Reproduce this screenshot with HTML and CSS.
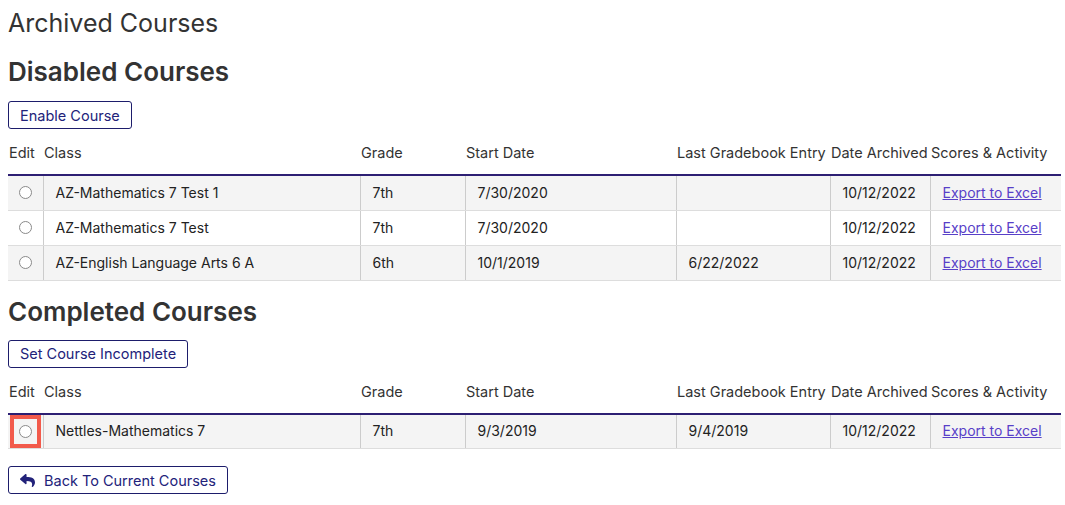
FILE: index.html
```html
<html>
<head>
    <title>Archived Courses</title>
<link rel="stylesheet" href="styles.css">
</head>
<body>
<div class="page">
    <h1 class="title">Archived Courses</h1>

    <h2 class="section">Disabled Courses</h2>
    <button class="btn">Enable Course</button>

    <table class="courses">
        <colgroup>
            <col class="c-edit"><col class="c-class"><col class="c-grade"><col class="c-start">
            <col class="c-last"><col class="c-arch"><col class="c-score">
        </colgroup>
        <thead>
            <tr>
                <th>Edit</th><th>Class</th><th>Grade</th><th>Start Date</th>
                <th>Last Gradebook Entry</th><th>Date Archived</th><th>Scores &amp; Activity</th>
            </tr>
        </thead>
        <tbody>
            <tr>
                <td class="edit"><input type="radio" name="disabled"></td>
                <td>AZ-Mathematics 7 Test 1</td><td>7th</td><td>7/30/2020</td>
                <td></td><td>10/12/2022</td><td><a href="#">Export to Excel</a></td>
            </tr>
            <tr>
                <td class="edit"><input type="radio" name="disabled"></td>
                <td>AZ-Mathematics 7 Test</td><td>7th</td><td>7/30/2020</td>
                <td></td><td>10/12/2022</td><td><a href="#">Export to Excel</a></td>
            </tr>
            <tr>
                <td class="edit"><input type="radio" name="disabled"></td>
                <td>AZ-English Language Arts 6 A</td><td>6th</td><td>10/1/2019</td>
                <td>6/22/2022</td><td>10/12/2022</td><td><a href="#">Export to Excel</a></td>
            </tr>
        </tbody>
    </table>

    <h2 class="section">Completed Courses</h2>
    <button class="btn">Set Course Incomplete</button>

    <table class="courses">
        <colgroup>
            <col class="c-edit"><col class="c-class"><col class="c-grade"><col class="c-start">
            <col class="c-last"><col class="c-arch"><col class="c-score">
        </colgroup>
        <thead>
            <tr>
                <th>Edit</th><th>Class</th><th>Grade</th><th>Start Date</th>
                <th>Last Gradebook Entry</th><th>Date Archived</th><th>Scores &amp; Activity</th>
            </tr>
        </thead>
        <tbody>
            <tr>
                <td class="edit"><span class="highlight"><input type="radio" name="completed"></span></td>
                <td>Nettles-Mathematics 7</td><td>7th</td><td>9/3/2019</td>
                <td>9/4/2019</td><td>10/12/2022</td><td><a href="#">Export to Excel</a></td>
            </tr>
        </tbody>
    </table>

    <button class="btn back">
        <svg class="icon" viewBox="0 0 512 512"><path d="M8.309 189.836L184.313 37.851C199.719 24.546 224 35.347 224 56.015v80.053c160.629 1.839 288 34.032 288 186.258 0 61.441-39.581 122.309-83.333 154.132-13.653 9.931-33.111-2.533-28.077-18.631 45.344-145.012-21.507-183.51-176.59-185.742V360c0 20.7-24.3 31.453-39.687 18.164l-176.004-152c-11.071-9.562-11.086-26.753 0-36.328z"/></svg>
        Back To Current Courses
    </button>
</div>
</body>
</html>
```

FILE: styles.css
```css
body
{
margin:0;
background:#fff;
font-family:Inter, "Liberation Sans", sans-serif;
color:#222;
}

.page
{
padding:8px 4px 8px 8px;
}

.title
{
margin:0;
font-size:25px;
font-weight:400;
line-height:30px;
color:#333;
}

.section
{
margin:15px 0 12px 0;
font-size:26px;
font-weight:600;
line-height:32px;
color:#333;
}

.title + .section
{
margin-top:18px;
margin-bottom:13px;
}

.btn
{
display:flex;
align-items:center;
gap:9px;
height:28px;
padding:0 11px;
border:1px solid #1d1d6b;
border-radius:3px;
background:#fff;
font-family:inherit;
font-size:14.5px;
color:#22227a;
}

.back
{
margin-top:17px;
}

.icon
{
width:15px;
height:15px;
fill:#22227a;
}

.courses
{
width:100%;
margin-top:5px;
border-collapse:collapse;
table-layout:fixed;
font-size:14px;
}

.c-edit { width:35px; }
.c-class { width:317px; }
.c-grade { width:105px; }
.c-start { width:211px; }
.c-last { width:154px; }
.c-arch { width:100px; }
.c-score { width:131px; }

.courses th
{
padding:9px 1px 11px 1px;
line-height:20px;
font-size:14.5px;
font-weight:400;
text-align:left;
white-space:nowrap;
color:#333;
border-bottom:2px solid #2d1f73;
}

.courses td
{
height:35px;
padding:0 12px;
line-height:20px;
border-bottom:1px solid #ddd;
border-left:1px solid #ccc;
white-space:nowrap;
}

.courses td.edit
{
padding:0;
border-left:none;
text-align:center;
}

.courses tbody tr:nth-child(odd)
{
background:#f4f4f4;
}

.courses a
{
color:#5840c8;
}

.courses input
{
appearance:none;
width:13px;
height:13px;
margin:0;
border:1px solid #8a8a8a;
border-radius:50%;
background:#fff;
vertical-align:middle;
}

.highlight
{
display:inline-flex;
align-items:center;
justify-content:center;
width:23px;
height:25px;
border:4px solid #f25a4b;
vertical-align:middle;
}
```
